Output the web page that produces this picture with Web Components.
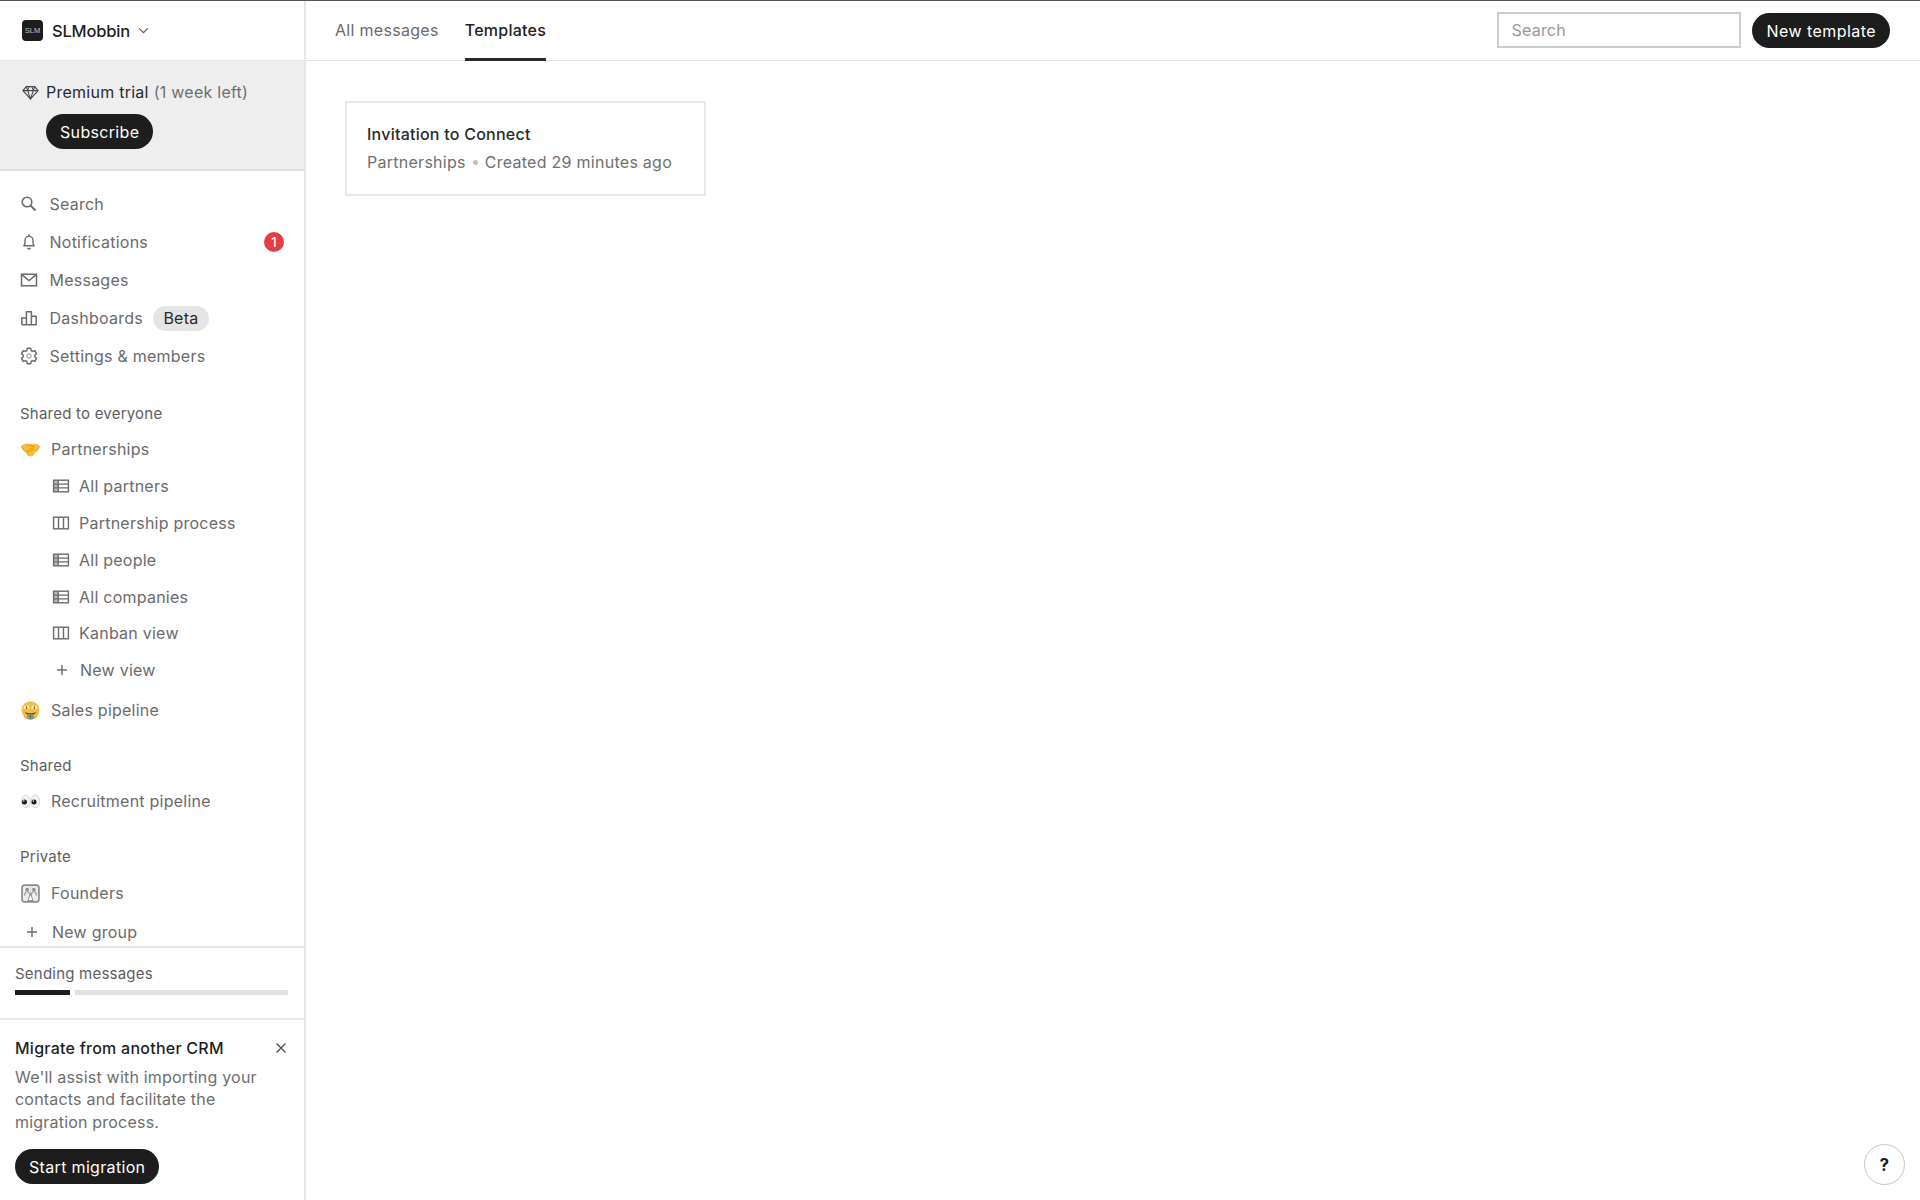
<!DOCTYPE html>
<html lang="en">
<head>
<meta charset="utf-8">
<title>Templates</title>
<style>
html,body{margin:0;height:100%;background:#fff}
body{font-family:Inter,"Liberation Sans",sans-serif;font-size:16px;letter-spacing:.24px;color:#6b6b6b;overflow:hidden}
</style>
</head>
<body>
<x-app>
  <x-sidebar slot="side">
    <x-workspace slot="head" name="SLMobbin"></x-workspace>
    <x-trial slot="head"></x-trial>

    <x-nav-item icon="search">Search</x-nav-item>
    <x-nav-item icon="bell">Notifications<x-count slot="end">1</x-count></x-nav-item>
    <x-nav-item icon="mail">Messages</x-nav-item>
    <x-nav-item icon="bars">Dashboards<x-tag slot="after">Beta</x-tag></x-nav-item>
    <x-nav-item icon="gear">Settings &amp; members</x-nav-item>

    <x-heading style="margin-top:28px">Shared to everyone</x-heading>
    <x-nav-item kind="group" icon="handshake" style="margin-top:7px;height:38px">Partnerships</x-nav-item>
    <x-nav-item kind="sub" icon="table">All partners</x-nav-item>
    <x-nav-item kind="sub" icon="kanban">Partnership process</x-nav-item>
    <x-nav-item kind="sub" icon="table">All people</x-nav-item>
    <x-nav-item kind="sub" icon="table">All companies</x-nav-item>
    <x-nav-item kind="sub" icon="kanban">Kanban view</x-nav-item>
    <x-nav-item kind="subadd" icon="plus">New view</x-nav-item>
    <x-nav-item kind="group" icon="money" style="margin-top:3.500px">Sales pipeline</x-nav-item>

    <x-heading style="margin-top:27px">Shared</x-heading>
    <x-nav-item kind="group" icon="eyes" style="margin-top:8px">Recruitment pipeline</x-nav-item>

    <x-heading style="margin-top:27px">Private</x-heading>
    <x-nav-item kind="group" icon="founders" style="margin-top:9px">Founders</x-nav-item>
    <x-nav-item kind="add" icon="plus" style="margin-top:3px">New group</x-nav-item>

    <x-progress slot="foot">Sending messages</x-progress>
    <x-promo slot="foot" title="Migrate from another CRM" action="Start migration">We'll assist with importing your contacts and facilitate the migration process.</x-promo>
  </x-sidebar>

  <x-topbar slot="main">
    <x-tab>All messages</x-tab>
    <x-tab active>Templates</x-tab>
    <x-search slot="right">Search</x-search>
    <x-pill slot="right" style="letter-spacing:.45px">New template</x-pill>
  </x-topbar>
  <x-content slot="main">
    <x-template-card group="Partnerships" meta="Created 29 minutes ago">Invitation to Connect</x-template-card>
  </x-content>
  <x-help slot="float">?</x-help>
</x-app>

<script>
const ICONS = {
  search:'<circle cx="7" cy="7" r="4.800" fill="none" stroke="currentColor" stroke-width="1.600"/><path d="M10.500 10.500 15.500 15.500" stroke="currentColor" stroke-width="1.800" fill="none"/>',
  bell:'<path d="M3.800 12.800c.9-.8 1.200-1.600 1.200-3V7.400a4 4 0 0 1 8 0v2.400c0 1.400.3 2.200 1.200 3z" fill="none" stroke="currentColor" stroke-width="1.400" stroke-linejoin="round"/><path d="M9 1.200v2.200M7.400 14.800c.3.9.9 1.300 1.600 1.300s1.300-.4 1.600-1.300" stroke="currentColor" stroke-width="1.400" fill="none"/>',
  mail:'<rect x="1.500" y="3.200" width="15" height="11.600" fill="none" stroke="currentColor" stroke-width="1.500"/><path d="M2 3.800 9 9.600l7-5.800" fill="none" stroke="currentColor" stroke-width="1.500"/>',
  bars:'<path d="M1.800 15.700V9h4.600v6.700M6.400 15.700V2.800h5v12.900M11.400 7.200h4.800v8.500H1.800" fill="none" stroke="currentColor" stroke-width="1.500" stroke-linejoin="round"/>',
  gear:'<path d="M7.300 1.300h3.400l.5 2.300 1.300.8 2.300-.7 1.700 3-1.700 1.600v1.400l1.700 1.600-1.700 3-2.300-.7-1.300.8-.5 2.300H7.300l-.5-2.300-1.300-.8-2.300.7-1.700-3 1.700-1.600V8.300L1.500 6.700l1.700-3 2.300.7 1.300-.8z" fill="none" stroke="currentColor" stroke-width="1.500" stroke-linejoin="round"/><path d="M9 6l2.600 1.500v3L9 12l-2.600-1.500v-3z" fill="currentColor" opacity=".55"/><circle cx="9" cy="9" r="1.300" fill="#fff"/>',
  table:'<rect x="1.600" y="3.200" width="14.800" height="11.600" fill="none" stroke="currentColor" stroke-width="1.400"/><rect x="2" y="3.600" width="4.200" height="10.800" fill="currentColor" opacity=".45"/><path d="M1.600 7.100h14.800M1.600 10.900h14.800M6.200 3.200v11.600" fill="none" stroke="currentColor" stroke-width="1.400"/>',
  kanban:'<rect x="1.600" y="3.200" width="14.800" height="11.600" fill="none" stroke="currentColor" stroke-width="1.400"/><path d="M6.500 3.200v11.600M11.500 3.200v11.600" fill="none" stroke="currentColor" stroke-width="1.400"/>',
  plus:'<path d="M9 4v10M4 9h10" fill="none" stroke="currentColor" stroke-width="1.400"/>',
  handshake:'<path d="M.3 5.500C2 3.900 4 3 6 3.300l3 1 3-1c2-.3 4 .6 5.700 2.200-.3 2.700-1.600 4.400-3.300 5.500l-2.900 3.800c-.8 1.100-4.200 1.100-5 0L3.600 11C1.900 9.900.6 8.200.3 5.500z" fill="#f7bf3a"/><path d="M5.500 5.500 9 4.600l3.400 2.300" fill="none" stroke="#dd9a1c" stroke-width="1"/><path d="M5 9.500l2.500 2.600M7.200 8.400l2.800 2.700M9.500 7.600l2.500 2.300" fill="none" stroke="#dd9a1c" stroke-width="1.100"/><path d="M.5 6C1.500 8.400 2.900 10 4 11M17.500 6c-1 2.400-2.400 4-3.500 5" fill="none" stroke="#eba92a" stroke-width="1.100"/>',
  money:'<circle cx="9" cy="8.600" r="8.400" fill="#f6bd45"/><path d="M.7 9.300a8.300 8.300 0 0 0 16.600 0c-.5 4.200-4 7.300-8.300 7.300S1.200 13.500.7 9.300z" fill="#d9902a"/><path d="M2.300 7C2.800 4.900 4.200 4 5.800 4S8 5.400 8.200 7.200zM9.800 7.200C10 5.400 10.700 4 12.200 4s3 .9 3.500 3z" fill="#fff3d6"/><path d="M5.300 4.600v3M12.700 4.600v3" stroke="#5f8a3a" stroke-width="1.200"/><path d="M3.500 10.100c1.300 1 3.500 1.500 5.500 1.500s4.200-.5 5.500-1.500c-.7 1.500-1.800 2.300-2.900 2.700H6.400c-1.100-.4-2.200-1.200-2.900-2.700z" fill="#5b3414"/><rect x="6" y="12" width="6" height="5.500" rx="2.400" fill="#7f9a7a"/><path d="M9 12.400v4.600" stroke="#56705a" stroke-width=".8"/>',
  eyes:'<ellipse cx="4.500" cy="9" rx="4.200" ry="6" fill="#f4f4f4" stroke="#d2d2d2" stroke-width=".8"/><ellipse cx="13.500" cy="9" rx="4.200" ry="6" fill="#f4f4f4" stroke="#d2d2d2" stroke-width=".8"/><circle cx="3.300" cy="9.400" r="2.400" fill="#1c1c1c"/><circle cx="12.300" cy="9.400" r="2.400" fill="#1c1c1c"/><circle cx="2.700" cy="8.600" r=".7" fill="#fff"/><circle cx="11.700" cy="8.600" r=".7" fill="#fff"/>',
  founders:'<rect x="1" y="1" width="16" height="16" rx="2.600" fill="#ededed" stroke="#8c8c8c" stroke-width="1.600"/><path d="M9 2v14M2 9h3M13 9h3" stroke="#cfcfcf" stroke-width=".8"/><circle cx="5.800" cy="5.200" r="1.700" fill="#8e8e8e"/><circle cx="12.200" cy="5.200" r="1.700" fill="#8e8e8e"/><path d="M3.400 11c.2-2.800 1-3.900 2.400-3.900S8 8.200 8.200 11M9.800 11c.2-2.800 1-3.900 2.400-3.900s2.200 1.100 2.400 3.900" fill="none" stroke="#9a9a9a" stroke-width="1.100"/><path d="M9 9l-2.400 6.600h4.800z" fill="#fff" stroke="#9a9a9a" stroke-width="1"/>',
  diamond:'<path d="M4.500 2.700h9L17 7l-8 8.800L1 7z" fill="none" stroke="currentColor" stroke-width="1.300" stroke-linejoin="round"/><path d="M1 7h16M6 7l3 8.800L12 7M6 7l1.500-4.300M12 7l-1.500-4.300M6 7 4.500 2.700M12 7l1.500-4.300" fill="none" stroke="currentColor" stroke-width="1.100"/>',
  close:'<path d="M4 4l10 10M14 4 4 14" fill="none" stroke="currentColor" stroke-width="1.400"/>',
  chevron:'<path d="M3 6.200l6 5.800 6-5.800" fill="none" stroke="currentColor" stroke-width="1.500"/>'
};
function define(name, css, html){
  customElements.define(name, class extends HTMLElement{
    constructor(){
      super();
      this.attachShadow({mode:'open'});
    }
    connectedCallback(){
      if(this.shadowRoot.firstChild) return;
      this.shadowRoot.innerHTML = '<style>'+css+'</style>'+(typeof html==='function'?html(this):html);
    }
  });
}
customElements.define('x-glyph', class extends HTMLElement{
  connectedCallback(){
    if(this.shadowRoot) return;
    const s=this.getAttribute('size')||18;
    this.attachShadow({mode:'open'}).innerHTML='<style>:host{display:inline-flex;flex:none;line-height:0}svg{display:block}</style><svg width="'+s+'" height="'+s+'" viewBox="0 0 18 18">'+ICONS[this.getAttribute('name')]+'</svg>';
  }
});
define('x-app',
 `:host{display:flex;height:100vh;border-top:1px solid #555;box-sizing:border-box;position:relative}
  .side{flex:none;width:306px;display:flex}
  .main{flex:1;min-width:0;display:flex;flex-direction:column}`,
 `<div class="side"><slot name="side"></slot></div><div class="main"><slot name="main"></slot></div><slot name="float"></slot>`);
define('x-sidebar',
 `:host{display:flex;flex-direction:column;width:306px;box-sizing:border-box;border-right:2px solid #e6e6e6;height:100%}
  .nav{flex:1;min-height:0;overflow:hidden;padding-top:14px}`,
 `<slot name="head"></slot><div class="nav"><slot></slot></div><slot name="foot"></slot>`);
define('x-workspace',
 `:host{display:flex;align-items:center;height:60px;box-sizing:border-box;padding:0 0 0 22px;border-bottom:1px solid #e2e2e2}
  .logo{width:21px;height:21px;border-radius:4px;background:#1d1d1d;color:#c4c4c4;font:7.500px "Liberation Sans",sans-serif;display:flex;align-items:center;justify-content:center;margin-right:9px;letter-spacing:0}
  .name{font-weight:500;font-size:16.500px;letter-spacing:-.2px;color:#1d1d1d}
  x-glyph{margin-left:7px;color:#5c5c5c}`,
 h=>`<span class="logo">SLM</span><span class="name">${h.getAttribute('name')}</span><x-glyph name="chevron" size="13"></x-glyph>`);
define('x-trial',
 `:host{display:block;background:#eee;height:110px;box-sizing:border-box;border-bottom:2px solid #e2e2e2;padding:19px 0 0 22px}
  .line{display:flex;align-items:center;height:24px;color:#6e6e6e;white-space:nowrap;letter-spacing:.25px}
  x-glyph{color:#4a4a4a;margin-right:7px}
  b{font-weight:400;color:#2a2a2a;margin-right:5px}
  x-pill{margin:10px 0 0 24px}`,
 `<div class="line"><x-glyph name="diamond" size="17"></x-glyph><b>Premium trial</b>(1 week left)</div><x-pill>Subscribe</x-pill>`);
define('x-pill',
 `:host{display:inline-flex;align-items:center;height:35px;padding:0 14px;border-radius:18px;background:#1d1d1d;color:#fff;font-size:16px;letter-spacing:.33px;white-space:nowrap;box-sizing:border-box}`,
 `<slot></slot>`);
define('x-nav-item',
 `:host{display:flex;align-items:center;height:38px;padding:0 19px 0 20px;color:#6b6b6b;white-space:nowrap;box-sizing:border-box}
  :host([kind=group]){height:36px}
  :host([kind=sub]),:host([kind=subadd]){height:36.750px;padding-left:52px}
  :host([kind=add]){height:36px;padding-left:24px}
  x-glyph{margin-right:11.500px}
  :host([kind=group]) x-glyph{margin:0 11px 0 1px}
  :host([kind=sub]) x-glyph{margin-right:9px}
  :host([kind=subadd]) x-glyph{margin:0 9px 0 1px}
  :host([kind=add]) x-glyph{margin-right:11px;margin-left:-1px}
  .end{margin-left:auto;display:flex}`,
 h=>{const k=h.getAttribute('kind');return `<x-glyph name="${h.getAttribute('icon')}" size="${k==='group'?19:18}"></x-glyph><slot></slot><slot name="after"></slot><span class="end"><slot name="end"></slot></span>`;});
define('x-count',
 `:host{display:flex;align-items:center;justify-content:center;width:20px;height:20px;border-radius:50%;background:#e53d47;color:#fff;font-size:13px;font-weight:500;letter-spacing:0;margin-right:1px}`,
 `<slot></slot>`);
define('x-tag',
 `:host{display:inline-flex;align-items:center;height:25px;margin-left:10px;padding:0 10.500px;border-radius:13px;background:#e5e5e5;color:#2a2a2a}`,
 `<slot></slot>`);
define('x-heading',
 `:host{display:flex;align-items:center;height:20px;padding-left:20px;font-size:15px;letter-spacing:.22px;color:#5e5e5e;white-space:nowrap}`,
 `<slot></slot>`);
define('x-progress',
 `:host{display:block;height:72px;box-sizing:border-box;border-top:2px solid #e6e6e6;padding:15px 16px 0 15px;font-size:15px;letter-spacing:.22px;color:#5e5e5e}
  .t{height:20px;display:flex;align-items:center}
  .b{display:flex;gap:5px;margin-top:7px;height:5px}
  .a{width:55px;background:#1d1d1d}.r{flex:1;background:#e2e2e2}`,
 `<div class="t"><slot></slot></div><div class="b"><span class="a"></span><span class="r"></span></div>`);
define('x-promo',
 `:host{display:block;flex:none;height:182px;box-sizing:border-box;border-top:2px solid #e8e8e8;padding:16px 15px 0;position:relative}
  .h{display:flex;align-items:center;justify-content:space-between;height:24px;color:#1f1f1f;font-weight:500;font-size:16px;letter-spacing:.25px}
  .p{margin-top:5.500px;line-height:22.600px;color:#6e6e6e;width:270px;letter-spacing:.2px}
  x-pill{margin-top:16px}
  x-glyph{color:#4a4a4a;margin-right:0}`,
 h=>`<div class="h"><span>${h.getAttribute('title')}</span><x-glyph name="close" size="16"></x-glyph></div><div class="p"><slot></slot></div><x-pill>${h.getAttribute('action')}</x-pill>`);
define('x-topbar',
 `:host{display:flex;align-items:stretch;height:60px;box-sizing:border-box;border-bottom:1px solid #e2e2e2;padding:0 30px 0 29px;gap:26px}
  .r{margin-left:auto;display:flex;align-items:center;gap:11px;margin-top:0}`,
 `<slot></slot><div class="r"><slot name="right"></slot></div>`);
define('x-tab',
 `:host{display:flex;align-items:center;height:60px;box-sizing:border-box;color:#6b6b6b;white-space:nowrap;border-bottom:3px solid transparent;letter-spacing:.3px}
  :host([active]){color:#222;border-bottom-color:#2a2a2a;font-weight:500;letter-spacing:.25px}`,
 `<slot></slot>`);
define('x-search',
 `:host{display:flex;align-items:center;width:244px;height:36px;box-sizing:border-box;border:2px solid #cdcdcd;padding-left:12px;color:#999;margin-top:-1px}`,
 `<slot></slot>`);
define('x-content',
 `:host{display:block;padding:41px 39px}`,
 `<slot></slot>`);
define('x-template-card',
 `:host{display:block;width:361px;height:95px;box-sizing:border-box;border:2px solid #e8e8e8;padding:19px 0 0 20px;white-space:nowrap;margin-top:-1px}
  .t{height:24px;display:flex;align-items:center;color:#2a2a2a;font-weight:500;letter-spacing:.24px}
  .s{height:24px;margin-top:4px;display:flex;align-items:center;color:#707070;letter-spacing:.27px}
  i{width:5px;height:5px;border-radius:50%;background:#c0c0c0;margin:0 7px 0 7px;display:block}`,
 h=>`<div class="t"><slot></slot></div><div class="s">${h.getAttribute('group')}<i></i>${h.getAttribute('meta')}</div>`);
define('x-help',
 `:host{position:absolute;right:15px;bottom:15px;width:41px;height:41px;box-sizing:border-box;border-radius:50%;border:1.500px solid #c8c8c8;background:#fff;color:#1d1d1d;display:flex;align-items:center;justify-content:center;font-weight:700;font-size:17px}`,
 `<slot></slot>`);
</script>
</body>
</html>
